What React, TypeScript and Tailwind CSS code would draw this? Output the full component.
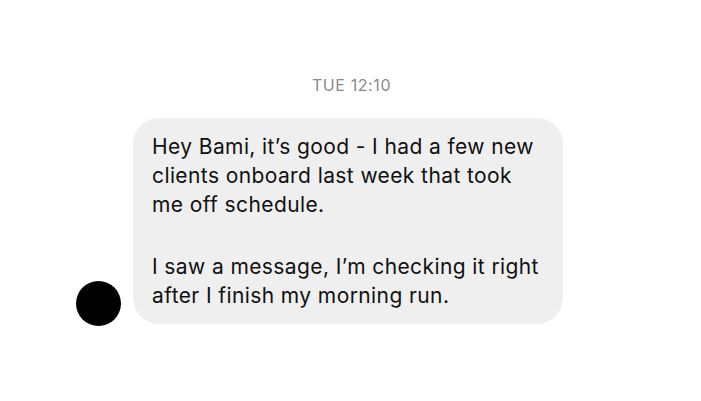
export default function App() {
  return (
    <div
      className="w-[701px] h-[401px] bg-white flex flex-col"
      style={{ fontFamily: 'Inter, "Liberation Sans", Arial, sans-serif' }}
    >
      <div className="pt-[76px] text-center text-[16px] leading-[18px] tracking-[0.6px] text-[#8a8a8a] pl-[2px]">
        TUE 12:10
      </div>
      <div className="flex items-end gap-[12px] pl-[76px] mt-[24px]">
        <div className="w-[45px] h-[45px] rounded-full bg-black shrink-0 -mb-[2px]" />
        <div className="w-[430px] bg-[#efefef] rounded-[26px] pl-[19px] pr-[10px] pt-[14px] pb-[14px] text-[21px] leading-[29px] tracking-[0.4px] text-[#111]">
          <p>
            Hey Bami, it’s good - I had a few new
            <br />
            clients onboard last week that took
            <br />
            me off schedule.
          </p>
          <p className="mt-[33px]">
            I saw a message, I’m checking it right
            <br />
            after I finish my morning run.
          </p>
        </div>
      </div>
    </div>
  );
}
